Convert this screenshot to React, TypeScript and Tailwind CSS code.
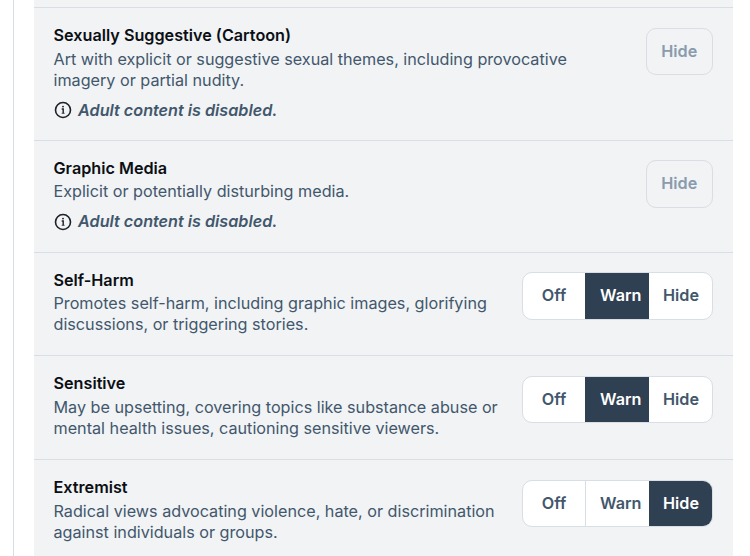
import React from 'react'

type Setting = 'Off' | 'Warn' | 'Hide'

interface Label {
  name: string
  lines: string[]
  setting: Setting
  height: string
  adult?: boolean
}

const labels: Label[] = [
  {
    name: 'Sexually Suggestive (Cartoon)',
    lines: ['Art with explicit or suggestive sexual themes, including provocative', 'imagery or partial nudity.'],
    setting: 'Hide',
    height: 'h-[132.6px]',
    adult: true
  },
  {
    name: 'Graphic Media',
    lines: ['Explicit or potentially disturbing media.'],
    setting: 'Hide',
    height: 'h-[111.9px]',
    adult: true
  },
  {
    name: 'Self-Harm',
    lines: ['Promotes self-harm, including graphic images, glorifying', 'discussions, or triggering stories.'],
    setting: 'Warn',
    height: 'h-[103.6px]'
  },
  {
    name: 'Sensitive',
    lines: ['May be upsetting, covering topics like substance abuse or', 'mental health issues, cautioning sensitive viewers.'],
    setting: 'Warn',
    height: 'h-[103.8px]'
  },
  {
    name: 'Extremist',
    lines: ['Radical views advocating violence, hate, or discrimination', 'against individuals or groups.'],
    setting: 'Hide',
    height: 'h-[103.8px]'
  }
]

const options: { value: Setting; width: string }[] = [
  { value: 'Off', width: 'w-[62px]' },
  { value: 'Warn', width: 'w-[63.5px] pl-[7px] border-l' },
  { value: 'Hide', width: 'w-[63.5px] pl-[1.5px]' }
]

const InfoIcon: React.FC = () => (
  <svg viewBox="0 0 18 18" fill="none" stroke="currentColor" className="h-[18px] w-[18px] text-[#1c2126]">
    <circle cx="9" cy="9" r="7.5" strokeWidth="1.6" />
    <path d="M7.7 8H9.2V12.3" strokeWidth="1.4" />
    <path d="M7.7 12.3H10.6" strokeWidth="0.8" />
    <circle cx="9" cy="5.6" r="0.95" fill="currentColor" stroke="none" />
  </svg>
)

const LabelRow: React.FC<{ label: Label }> = ({ label }) => (
  <div className={`flex items-start justify-between border-t border-[#d8dee4] pl-[19.5px] pr-5 pt-4 ${label.height}`}>
    <div className="shrink-0 whitespace-nowrap">
      <h3 className="text-[16.2px] leading-[22px] font-semibold text-[#0b0f14]">{label.name}</h3>
      <div className="pt-[2.5px] text-[16.18px] leading-[21px] text-[#42576c]">
        {label.lines.map((line) => (
          <p key={line}>{line}</p>
        ))}
      </div>
      {label.adult && (
        <div className="flex items-center gap-[6px] pl-[0.5px] pt-[9px] text-[16.2px] leading-[21px] font-semibold italic text-[#42576c]">
          <InfoIcon />
          Adult content is disabled.
        </div>
      )}
    </div>
    {label.adult ? (
      <button disabled className="mt-[3.4px] h-[47.5px] w-[67.5px] rounded-[10px] border border-[#d8dee4] pb-px text-[16.2px] font-semibold text-[#8a9bad]">
        {label.setting}
      </button>
    ) : (
      <div className="mt-[3.4px] flex h-[47.5px] w-[191px] overflow-hidden rounded-[10px] border border-[#d8dee4] bg-white">
        {options.map(({ value, width }) => (
          <button
            key={value}
            className={`${width} pb-px text-[16.2px] font-semibold ${
              label.setting === value ? 'border-[#2e4052] bg-[#2e4052] text-white' : 'border-[#d8dee4] text-[#42576c]'
            }`}
          >
            {value}
          </button>
        ))}
      </div>
    )}
  </div>
)

export default function App() {
  return (
    <div className="flex h-[556px] w-[750px] overflow-hidden bg-white font-['Inter',sans-serif]">
      <div className="ml-[13px] w-[720px] border-l border-[#d8dee4] pl-5">
        <div className="h-full bg-[#f1f3f5] pt-[7.3px]">
          {labels.map((label) => (
            <LabelRow key={label.name} label={label} />
          ))}
        </div>
      </div>
    </div>
  )
}
